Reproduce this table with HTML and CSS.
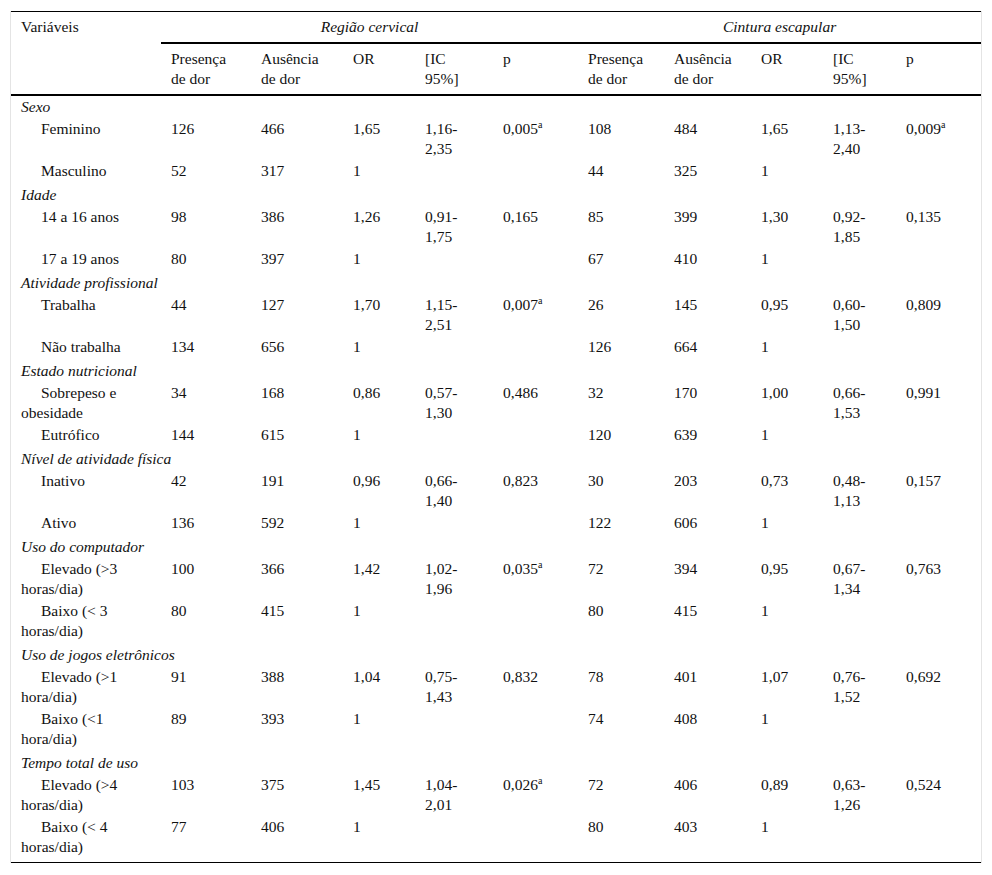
FILE: index.html
```html
<!DOCTYPE html>
<html lang="pt">
<head>
<meta charset="utf-8">
<title>Tabela</title>
<link rel="stylesheet" href="styles.css">
</head>
<body>
<div class="frame">
<table class="data">
<colgroup>
<col class="w150"><col class="w90"><col class="w92"><col class="w72"><col class="w78"><col class="w85"><col class="w86"><col class="w87"><col class="w72"><col class="w73"><col class="w85">
</colgroup>
<thead>
<tr class="h1">
<th rowspan="2" class="var">Variáveis</th>
<th colspan="5" class="grp">Região cervical</th>
<th colspan="5" class="grp">Cintura escapular</th>
</tr>
<tr class="h2">
<th>Presença de dor</th><th>Ausência de dor</th><th>OR</th><th>[IC<br>95%]</th><th>p</th>
<th>Presença de dor</th><th>Ausência de dor</th><th>OR</th><th>[IC<br>95%]</th><th>p</th>
</tr>
</thead>
<tbody>
<tr class="cat"><td colspan="11">Sexo</td></tr>
<tr><td class="lbl">Feminino</td><td>126</td><td>466</td><td>1,65</td><td>1,16-2,35</td><td>0,005<sup>a</sup></td><td>108</td><td>484</td><td>1,65</td><td>1,13-2,40</td><td>0,009<sup>a</sup></td></tr>
<tr class="last"><td class="lbl">Masculino</td><td>52</td><td>317</td><td>1</td><td></td><td></td><td>44</td><td>325</td><td>1</td><td></td><td></td></tr>

<tr class="cat"><td colspan="11">Idade</td></tr>
<tr><td class="lbl">14 a 16 anos</td><td>98</td><td>386</td><td>1,26</td><td>0,91-1,75</td><td>0,165</td><td>85</td><td>399</td><td>1,30</td><td>0,92-1,85</td><td>0,135</td></tr>
<tr class="last"><td class="lbl">17 a 19 anos</td><td>80</td><td>397</td><td>1</td><td></td><td></td><td>67</td><td>410</td><td>1</td><td></td><td></td></tr>

<tr class="cat"><td colspan="11">Atividade profissional</td></tr>
<tr><td class="lbl">Trabalha</td><td>44</td><td>127</td><td>1,70</td><td>1,15-2,51</td><td>0,007<sup>a</sup></td><td>26</td><td>145</td><td>0,95</td><td>0,60-1,50</td><td>0,809</td></tr>
<tr class="last"><td class="lbl">Não trabalha</td><td>134</td><td>656</td><td>1</td><td></td><td></td><td>126</td><td>664</td><td>1</td><td></td><td></td></tr>

<tr class="cat"><td colspan="11">Estado nutricional</td></tr>
<tr><td class="lbl">Sobrepeso e obesidade</td><td>34</td><td>168</td><td>0,86</td><td>0,57-1,30</td><td>0,486</td><td>32</td><td>170</td><td>1,00</td><td>0,66-1,53</td><td>0,991</td></tr>
<tr class="last"><td class="lbl">Eutrófico</td><td>144</td><td>615</td><td>1</td><td></td><td></td><td>120</td><td>639</td><td>1</td><td></td><td></td></tr>

<tr class="cat"><td colspan="11">Nível de atividade física</td></tr>
<tr><td class="lbl">Inativo</td><td>42</td><td>191</td><td>0,96</td><td>0,66-1,40</td><td>0,823</td><td>30</td><td>203</td><td>0,73</td><td>0,48-1,13</td><td>0,157</td></tr>
<tr class="last"><td class="lbl">Ativo</td><td>136</td><td>592</td><td>1</td><td></td><td></td><td>122</td><td>606</td><td>1</td><td></td><td></td></tr>

<tr class="cat"><td colspan="11">Uso do computador</td></tr>
<tr><td class="lbl">Elevado (&gt;3 horas/dia)</td><td>100</td><td>366</td><td>1,42</td><td>1,02-1,96</td><td>0,035<sup>a</sup></td><td>72</td><td>394</td><td>0,95</td><td>0,67-1,34</td><td>0,763</td></tr>
<tr class="last"><td class="lbl">Baixo (&lt; 3 horas/dia)</td><td>80</td><td>415</td><td>1</td><td></td><td></td><td>80</td><td>415</td><td>1</td><td></td><td></td></tr>

<tr class="cat"><td colspan="11">Uso de jogos eletrônicos</td></tr>
<tr><td class="lbl">Elevado (&gt;1 hora/dia)</td><td>91</td><td>388</td><td>1,04</td><td>0,75-1,43</td><td>0,832</td><td>78</td><td>401</td><td>1,07</td><td>0,76-1,52</td><td>0,692</td></tr>
<tr class="last"><td class="lbl">Baixo (&lt;1 hora/dia)</td><td>89</td><td>393</td><td>1</td><td></td><td></td><td>74</td><td>408</td><td>1</td><td></td><td></td></tr>

<tr class="cat"><td colspan="11">Tempo total de uso</td></tr>
<tr><td class="lbl">Elevado (&gt;4 horas/dia)</td><td>103</td><td>375</td><td>1,45</td><td>1,04-2,01</td><td>0,026<sup>a</sup></td><td>72</td><td>406</td><td>0,89</td><td>0,63-1,26</td><td>0,524</td></tr>
<tr class="last end"><td class="lbl">Baixo (&lt; 4 horas/dia)</td><td>77</td><td>406</td><td>1</td><td></td><td></td><td>80</td><td>403</td><td>1</td><td></td><td></td></tr>
</tbody>
</table>
</div>
</body>
</html>
```

FILE: styles.css
```css
html, body {
  margin: 0;
  padding: 0;
  background: #fff;
}
body {
  padding: 11px 10px 0 10px;
  font-family: "Liberation Serif", "Times New Roman", serif;
  font-size: 15.5px;
  color: #111;
}
.frame {
  width: 970px;
  border-left: 1px solid #e4e4e4;
  border-right: 1px solid #e4e4e4;
}
.data {
  width: 970px;
  table-layout: fixed;
  border-collapse: separate;
  border-spacing: 0;
  border-top: 1px solid #000;
  border-bottom: 1px solid #000;
  font: inherit;
  line-height: 20px;
}
.w150 { width: 150px; }
.w90 { width: 90px; }
.w92 { width: 92px; }
.w72 { width: 72px; }
.w78 { width: 78px; }
.w85 { width: 85px; }
.w86 { width: 86px; }
.w87 { width: 87px; }
.w73 { width: 73px; }
th {
  font-weight: normal;
  text-align: left;
  vertical-align: top;
  padding: 5px 10px;
}
th.grp {
  font-style: italic;
  text-align: center;
  border-bottom: 2px solid #000;
}
.h2 th, th.var {
  border-bottom: 2px solid #000;
}
td {
  padding: 1px 10px;
  vertical-align: top;
  text-align: left;
}
.cat td {
  font-style: italic;
}
td.lbl {
  text-indent: 20px;
}
tr.last td {
  padding-bottom: 3px;
}
tr.end td {
  padding-bottom: 5px;
}
sup {
  font-size: 10px;
  line-height: 0;
  vertical-align: 6px;
}
```
